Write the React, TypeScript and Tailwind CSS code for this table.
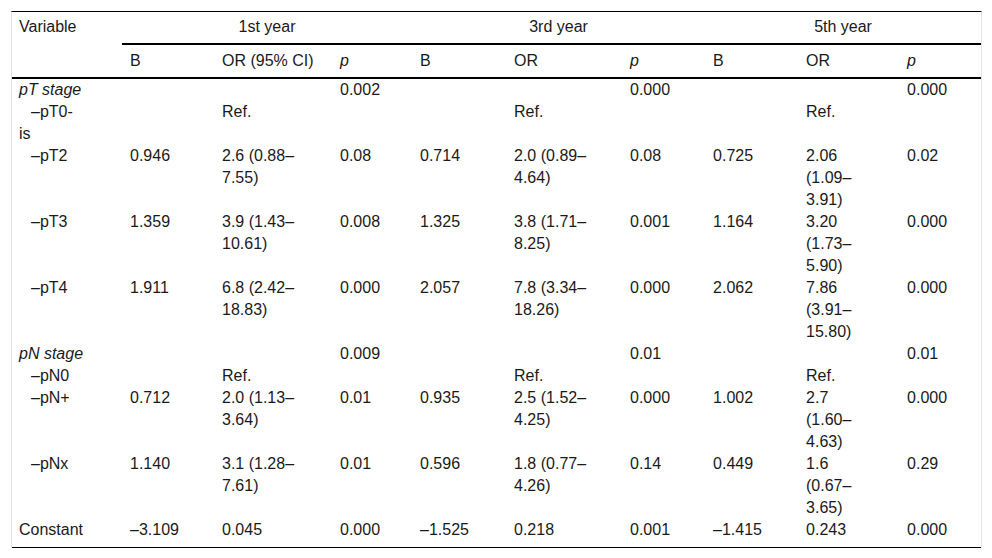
import React from "react";

type Cell = string | string[];

type Row = {
  label: string[];
  italic?: boolean;
  indent?: boolean;
  cells: Cell[];
};

const rows: Row[] = [
  { label: ["pT stage"], italic: true, cells: ["", "", "0.002", "", "", "0.000", "", "", "0.000"] },
  { label: ["–pT0-", "is"], indent: true, cells: ["", "Ref.", "", "", "Ref.", "", "", "Ref.", ""] },
  {
    label: ["–pT2"],
    indent: true,
    cells: ["0.946", ["2.6 (0.88–", "7.55)"], "0.08", "0.714", ["2.0 (0.89–", "4.64)"], "0.08", "0.725", ["2.06", "(1.09–", "3.91)"], "0.02"],
  },
  {
    label: ["–pT3"],
    indent: true,
    cells: ["1.359", ["3.9 (1.43–", "10.61)"], "0.008", "1.325", ["3.8 (1.71–", "8.25)"], "0.001", "1.164", ["3.20", "(1.73–", "5.90)"], "0.000"],
  },
  {
    label: ["–pT4"],
    indent: true,
    cells: ["1.911", ["6.8 (2.42–", "18.83)"], "0.000", "2.057", ["7.8 (3.34–", "18.26)"], "0.000", "2.062", ["7.86", "(3.91–", "15.80)"], "0.000"],
  },
  { label: ["pN stage"], italic: true, cells: ["", "", "0.009", "", "", "0.01", "", "", "0.01"] },
  { label: ["–pN0"], indent: true, cells: ["", "Ref.", "", "", "Ref.", "", "", "Ref.", ""] },
  {
    label: ["–pN+"],
    indent: true,
    cells: ["0.712", ["2.0 (1.13–", "3.64)"], "0.01", "0.935", ["2.5 (1.52–", "4.25)"], "0.000", "1.002", ["2.7", "(1.60–", "4.63)"], "0.000"],
  },
  {
    label: ["–pNx"],
    indent: true,
    cells: ["1.140", ["3.1 (1.28–", "7.61)"], "0.01", "0.596", ["1.8 (0.77–", "4.26)"], "0.14", "0.449", ["1.6", "(0.67–", "3.65)"], "0.29"],
  },
  { label: ["Constant"], cells: ["–3.109", "0.045", "0.000", "–1.525", "0.218", "0.001", "–1.415", "0.243", "0.000"] },
];

const subHeads = ["B", "OR (95% CI)", "p", "B", "OR", "p", "B", "OR", "p"];

function Lines({ value }: { value: Cell }) {
  const lines = Array.isArray(value) ? value : [value];
  return (
    <>
      {lines.map((l, i) => (
        <React.Fragment key={i}>
          {i > 0 && <br />}
          {l}
        </React.Fragment>
      ))}
    </>
  );
}

export default function App() {
  return (
    <div
      className="min-h-screen bg-white pt-[11px] pl-[11px] text-[16px] leading-[22px] text-[#1a1a1a]"
      style={{ fontFamily: '"Liberation Sans", Arial, sans-serif' }}
    >
      <table className="w-[971px] table-fixed border-separate border-spacing-0 border-t border-t-black border-x border-x-[#e4e4e4] border-b-0">
        <colgroup>
          <col className="w-[110px]" />
          <col className="w-[92px]" />
          <col className="w-[118px]" />
          <col className="w-[80px]" />
          <col className="w-[94px]" />
          <col className="w-[116px]" />
          <col className="w-[83px]" />
          <col className="w-[93px]" />
          <col className="w-[101px]" />
          <col className="w-[82px]" />
        </colgroup>
        <thead>
          <tr>
            <th rowSpan={2} className="border-b-2 border-black pl-[7px] pt-[4px] text-left align-top font-normal">
              Variable
            </th>
            <th colSpan={3} className="border-b-2 border-black pt-[4px] pb-[5px] text-center font-normal">
              1st year
            </th>
            <th colSpan={3} className="border-b-2 border-black pt-[4px] pb-[5px] text-center font-normal">
              3rd year
            </th>
            <th colSpan={3} className="border-b-2 border-black pt-[4px] pb-[5px] text-center font-normal">
              5th year
            </th>
          </tr>
          <tr>
            {subHeads.map((h, i) => (
              <th
                key={i}
                className={`border-b-2 border-black pl-[8px] pt-[5px] pb-[5px] text-left font-normal ${h === "p" ? "italic" : ""}`}
              >
                {h}
              </th>
            ))}
          </tr>
        </thead>
        <tbody>
          {rows.map((row, r) => {
            const last = r === rows.length - 1;
            return (
              <tr key={r} className="align-top">
                <td
                  className={`whitespace-nowrap pl-[7px] ${row.italic ? "italic" : ""} ${row.indent ? "indent-[12px]" : ""} ${last ? "border-b border-black pb-[6px]" : ""}`}
                >
                  <Lines value={row.label} />
                </td>
                {row.cells.map((c, i) => (
                  <td key={i} className={`whitespace-nowrap pl-[8px] ${last ? "border-b border-black pb-[6px]" : ""}`}>
                    <Lines value={c} />
                  </td>
                ))}
              </tr>
            );
          })}
        </tbody>
      </table>
    </div>
  );
}
